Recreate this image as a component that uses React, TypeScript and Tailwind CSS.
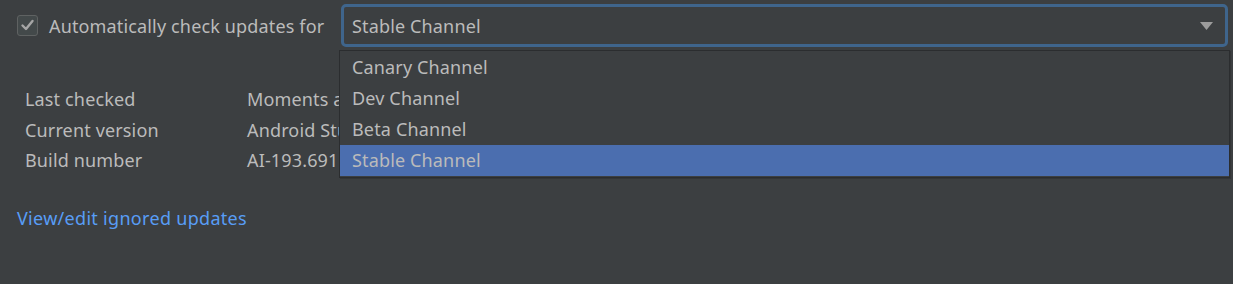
import React from "react";

export default function App() {
  const font = { fontFamily: '"Noto Sans", "Open Sans", sans-serif' };
  return (
    <div
      className="relative w-[1233px] h-[284px] bg-[#3c3f41] text-[#bbbbbb] text-[18px] tracking-[0.15px] overflow-hidden"
      style={font}
    >
      <div className="flex items-center pt-[4px] pl-[17px] h-[47px]">
        <div className="w-[21px] h-[21px] rounded-[3px] border border-[#5f6262] bg-[#43494a] flex items-center justify-center mb-[1px]">
          <svg width="15" height="15" viewBox="0 0 15 15">
            <path d="M2.5 7.5 L6 11 L12.5 3" stroke="#a6a6a6" strokeWidth="2.4" fill="none" strokeLinecap="round" strokeLinejoin="round" />
          </svg>
        </div>
        <span className="ml-[11px] leading-none">Automatically check updates for</span>
        <div className="ml-auto mr-[5px] w-[887px] h-[43px] rounded-[5px] border-[3px] border-[#3f658c] bg-[#3c3f41] flex items-center pl-[8px] pr-[12px]">
          <div className="flex-1 pt-[1px] leading-none">Stable Channel</div>
          <svg width="13" height="8" viewBox="0 0 13 8">
            <path d="M0 0 H13 L6.5 8 Z" fill="#9c9c9c" />
          </svg>
        </div>
      </div>

      <div className="grid grid-cols-[222px_1fr] pl-[25px] mt-[41px] gap-y-[8.5px] leading-[22px]">
        <div>Last checked</div>
        <div className="whitespace-nowrap">Moments ago</div>
        <div>Current version</div>
        <div className="whitespace-nowrap">Android Studio 4.0</div>
        <div>Build number</div>
        <div className="whitespace-nowrap">AI-193.6911.18.40.6514223</div>
      </div>

      <div className="pl-[17px] mt-[36px] text-[#589df6] leading-[22px] tracking-[0.3px]">View/edit ignored updates</div>

      <div className="absolute left-[339px] top-[50px] w-[891px] h-[128px] border border-[#2b2d2f] bg-[#3c3f41] pt-[1px] shadow-[1px_1px_0_#333537]">
        <div className="h-[31px] flex items-center pl-[12px]">Canary Channel</div>
        <div className="h-[31px] flex items-center pl-[12px]">Dev Channel</div>
        <div className="h-[31px] flex items-center pl-[12px]">Beta Channel</div>
        <div className="h-[31px] flex items-center pl-[12px] bg-[#4b6eaf]">Stable Channel</div>
      </div>
    </div>
  );
}
